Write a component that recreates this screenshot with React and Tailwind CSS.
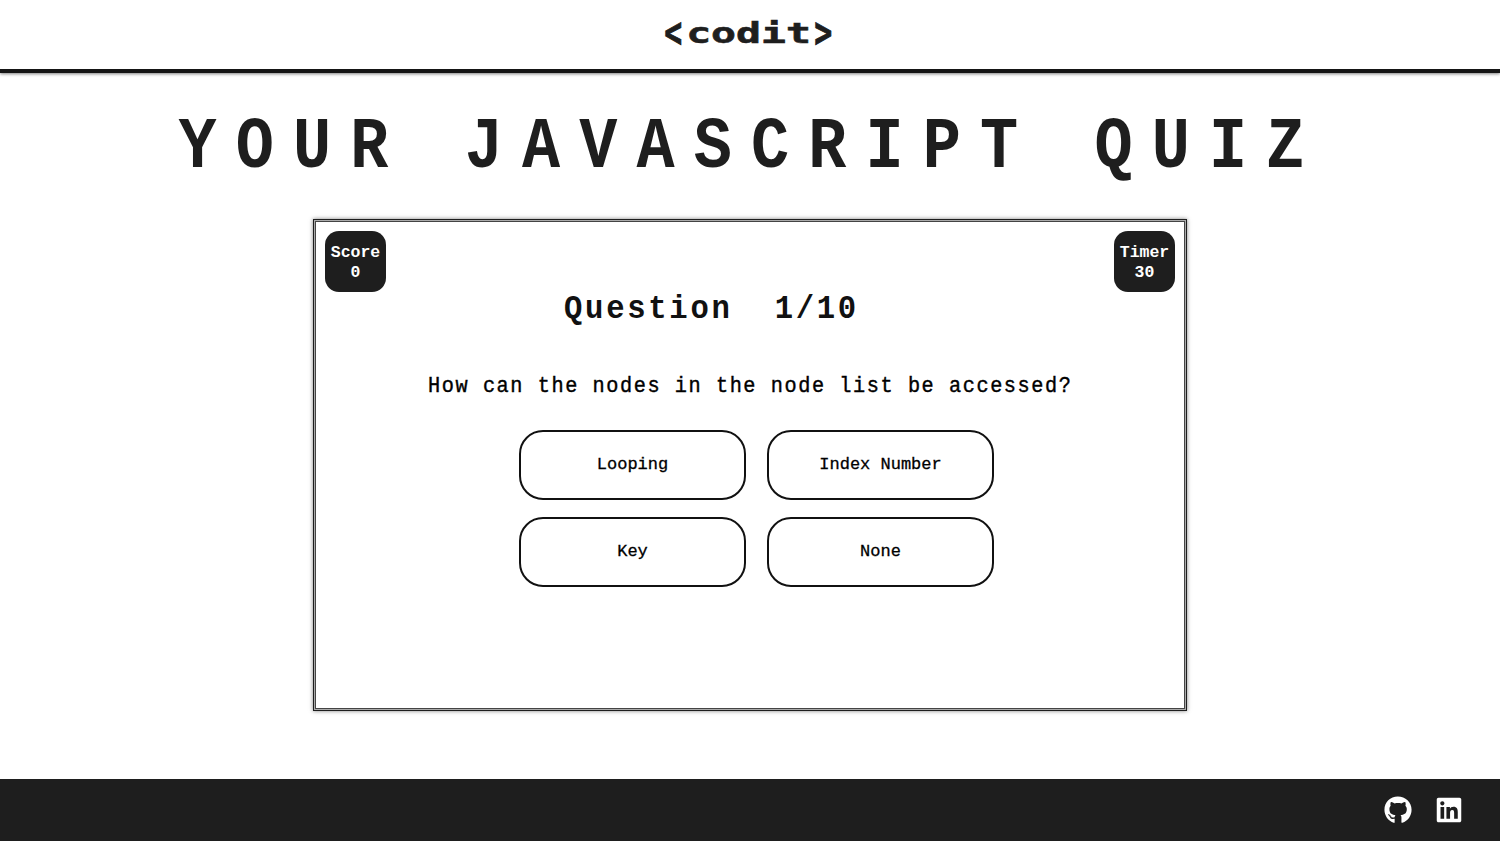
import { FaGithub, FaLinkedin } from "react-icons/fa";

const mono = "font-['Liberation_Mono',monospace] whitespace-pre";

function Badge({ label, value }) {
  return (
    <div className="flex h-[61px] w-[61px] flex-col items-center justify-center rounded-[14px] bg-[#1e1e1e] pt-0.5 text-[16.5px] leading-5 font-bold text-white">
      <span>{label}</span>
      <span>{value}</span>
    </div>
  );
}

function Answer({ children }) {
  return (
    <button className="flex h-[70px] w-[227px] items-center justify-center rounded-[24px] border-2 border-[#111] bg-white text-[17px] text-black [-webkit-text-stroke:0.3px_#000]">
      {children}
    </button>
  );
}

export default function App() {
  return (
    <div className={`${mono} flex h-[841px] w-[1500px] flex-col bg-white text-[#1e1e1e]`}>
      <header className="flex h-[73px] shrink-0 items-center justify-center border-b-4 border-[#151515] pb-px shadow-[0_1px_3px_rgba(0,0,0,0.5)]">
        <span className="inline-block scale-x-[1.48] pr-[2px] font-['DejaVu_Sans_Mono',monospace] text-[28px] leading-8 font-bold [-webkit-text-stroke:0.6px_#1e1e1e]">
          <span className="inline-block origin-[45%_55%] scale-x-[0.72] scale-y-[1.5]">{"<"}</span>
          codit
          <span className="inline-block origin-[50%_55%] scale-x-[0.72] scale-y-[1.5]">{">"}</span>
        </span>
      </header>
      <main className="flex grow flex-col items-center">
        <h1 className="mt-[35px] h-[80px] translate-x-[1px] scale-x-[0.87] text-[73px] leading-[80px] font-bold tracking-[22px]">
          YOUR JAVASCRIPT QUIZ
        </h1>
        <section className="mt-[31px] flex h-[492px] w-[874px] flex-col border border-[#1e1e1e] bg-[#aaa] p-px shadow-[0_0_4px_rgba(0,0,0,0.5)]">
          <div className="flex grow flex-col border border-[#444] bg-white px-[9px] pt-[9px]">
            <div className="flex justify-between">
              <Badge label="Score" value="0" />
              <Badge label="Timer" value="30" />
            </div>
            <h2 className="-mt-[3px] ml-[239px] h-10 w-max origin-left scale-x-[0.9] text-[34px] leading-10 font-bold tracking-[3px] text-[#111]">
              {"Question  1/10"}
            </h2>
            <p className="mt-[42px] h-8 w-max origin-left scale-x-[0.92] self-start pl-[112px] text-[22px] leading-8 tracking-[1.7px] text-black [-webkit-text-stroke:0.4px_#000]">
              How can the nodes in the node list be accessed?
            </p>
            <div className="mt-[27px] ml-[194px] grid w-max grid-cols-2 gap-x-[21px] gap-y-[17px]">
              <Answer>Looping</Answer>
              <Answer>Index Number</Answer>
              <Answer>Key</Answer>
              <Answer>None</Answer>
            </div>
          </div>
        </section>
      </main>
      <footer className="flex h-[62px] shrink-0 items-center justify-end gap-[23px] bg-[#1e1e1e] pr-[37px] text-white">
        <FaGithub size={28} />
        <FaLinkedin size={28} />
      </footer>
    </div>
  );
}
